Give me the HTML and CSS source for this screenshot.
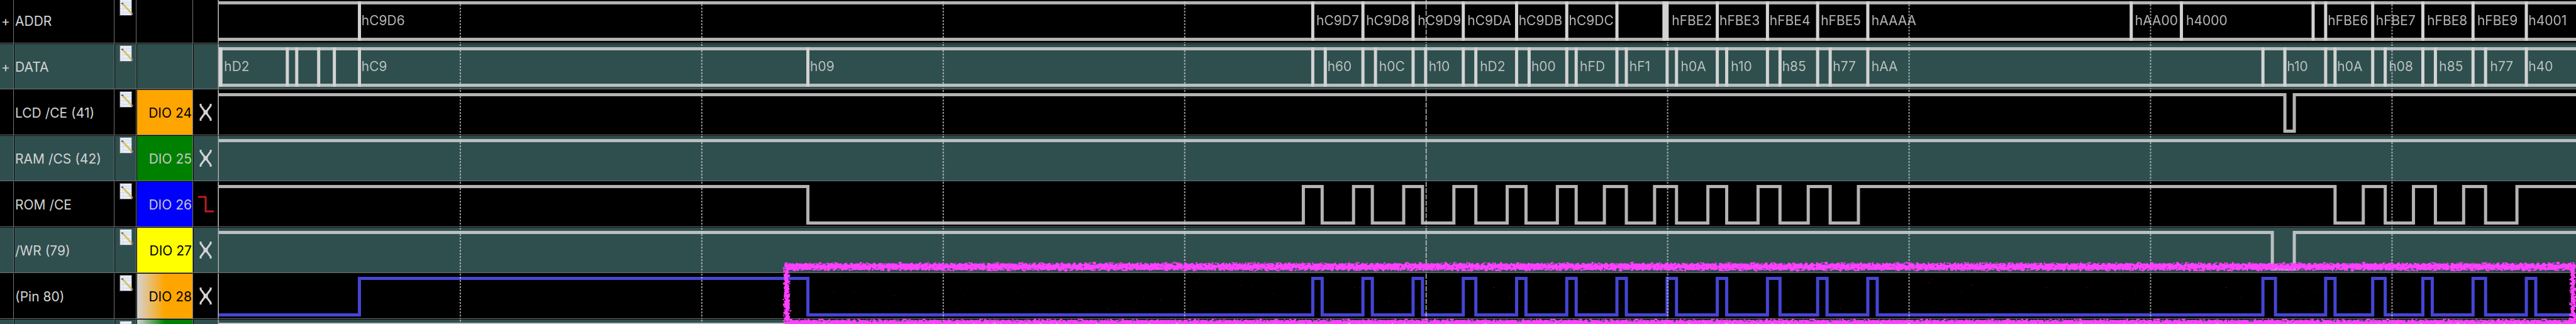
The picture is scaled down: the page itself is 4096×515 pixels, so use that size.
FILE: index.html
```html
<!DOCTYPE html>
<html lang="en">
<head>
<meta charset="utf-8">
<title>Logic analyzer</title>
<link rel="stylesheet" href="styles.css">
</head>
<body>
<svg class="defs" aria-hidden="true">
  <defs>
    <symbol id="note" viewBox="0 0 22 26">
      <rect x="0" y="0" width="20" height="26" fill="#8a8a8a" opacity=".6"/>
      <rect x="1" y="1" width="18" height="24" fill="#eef0f6"/>
      <path d="M3 5h16M3 9h16M3 15h16M3 21h16" stroke="#d5e5f6" stroke-width="3"/>
      <path d="M5.500 1v24" stroke="#e6d6ee"/>
      <path d="M1.500 2v23" stroke="#c4c4cc" stroke-dasharray="2 2"/>
      <path d="M5 7L19 22" stroke="#d9c25c" stroke-width="3"/>
      <path d="M3 6l3 1" stroke="#555" stroke-width="2"/>
      <path d="M19 22l2 2" stroke="#a07aa8" stroke-width="3"/>
    </symbol>
    <symbol id="ignore" viewBox="0 0 20 27">
      <path d="M2 0v3L8 11v5L2 24v3M18 0v3L12 11v5L18 24v3" fill="none" stroke="#d3d3d3" stroke-width="3"/>
      <rect x="8" y="10" width="4" height="7" fill="#d3d3d3"/>
    </symbol>
    <symbol id="falling" viewBox="0 0 25 27">
      <path d="M0 2h12v23h13" fill="none" stroke="#b81c28" stroke-width="3"/>
    </symbol>
  </defs>
</svg>
<main class="board" id="board">
  <svg class="marker" aria-hidden="true">
    <filter id="chalk" x="0" y="0" width="1" height="1" color-interpolation-filters="sRGB">
      <feTurbulence type="fractalNoise" baseFrequency=".22 .3" numOctaves="2" seed="7" result="noise"/>
      <feGaussianBlur in="SourceAlpha" stdDeviation="2" result="soft"/>
      <feComposite in="soft" in2="noise" operator="arithmetic" k1="0" k2=".4" k3=".6" k4="0"/>
      <feComponentTransfer result="mask"><feFuncA type="linear" slope="9" intercept="-4.400"/></feComponentTransfer>
      <feFlood flood-color="#ff40ff"/>
      <feComposite in2="mask" operator="in"/>
    </filter>
    <g filter="url(#chalk)">
      <rect width="100%" height="100%" fill="none"/>
      <rect x="3" y="2" width="99%" height="12"/>
      <rect x="50%" y="2" width="50%" height="12"/>
      <rect x="3" y="2" width="10" height="97"/>
      <rect class="marker-right" x="100%" y="2" width="9" height="97"/>
      <rect x="3" y="92" width="99%" height="10"/>
      <rect x="50%" y="92" width="50%" height="10"/>
    </g>
  </svg>
</main>
<script src="app.js"></script>
</body>
</html>
```
FILE: styles.css
```css
* { box-sizing: border-box; }

body {
  margin: 0;
  height: 100vh;
  overflow: hidden;
  background: #000;
  color: #d3d3d3;
  font: 21px/24px Inter, "Liberation Sans", sans-serif;
}

.defs { position: absolute; width: 0; height: 0; }

.board {
  position: relative;
  display: flex;
  flex-direction: column;
  height: calc(100vh + 4px);
  margin-top: -4px;
  overflow: hidden;
}

.row {
  display: grid;
  flex: none;
  grid-template-columns: 22px 160px 35px 90px 40px minmax(0, 1fr);
  height: 73px;
  border-bottom: 1px solid #737373;
  background: #000;
}

.row:nth-child(even) { background: #2f4f4f; }

.row.last {
  flex: 1 1 0;
  height: auto;
  min-height: 0;
  grid-template-rows: minmax(0, 1fr);
  border-bottom: 0;
  overflow: hidden;
}

.cell {
  display: flex;
  align-items: center;
  min-width: 0;
  border-top: 1px solid #000;
  border-left: 1px solid #000;
  border-right: 1px solid #737373;
  white-space: nowrap;
  overflow: hidden;
}

.cell:first-child { border-left: 0; }

button {
  display: flex;
  padding: 0;
  border: 0;
  background: none;
  color: inherit;
  font: inherit;
}

.expand { padding: 2px 0 0 2px; }
.name { padding: 2px 0 0 1px; }

.note { align-items: flex-start; padding: 2px 0 0 7px; }
.note svg { width: 22px; height: 26px; }

.pin { justify-content: flex-end; padding: 2px 1px 0 0; color: #c8c8c8; }
.pin.dark-text { color: #000; }
.orange { background: #ffa500; }
.green { background: #008000; }
.blue { background: #0000ff; }
.yellow { background: #ffff00; }
.fade-orange { background: linear-gradient(90deg, #d3d3d3, #ffa500 50%); }
.fade-green { background: linear-gradient(90deg, #d3d3d3, #008000 50%); }

.trigger { justify-content: center; }
.trigger .ignore { width: 20px; height: 27px; }
.trigger .falling { width: 25px; height: 27px; }

.lane {
  position: relative;
  border-top: 1px solid #000;
  border-left: 1px solid #b0b0b0;
  overflow: hidden;
}

.lane svg {
  position: relative;
  display: block;
  width: 100%;
  height: 71px;
}

.lane path {
  fill: none;
  stroke: #d3d3d3;
  vector-effect: non-scaling-stroke;
}

.lane .wave { stroke-width: 5px; opacity: .85; }
.lane .edge { stroke-width: 5px; }
.lane .low-pin { stroke: #5252fa; }
.lane .tick { stroke-width: 2px; stroke-dasharray: 3 2; opacity: .7; }
.lane .tick.center { stroke-dasharray: 8 2; }

.value {
  position: absolute;
  top: 24px;
  white-space: nowrap;
  opacity: .85;
}

.marker {
  position: absolute;
  z-index: 1;
  left: 30.350%;
  top: 420px;
  width: 69.650%;
  height: 99px;
}

.marker-right { transform: translateX(-9px); }
```
FILE: app.js
```js
const START = 418, SPAN = 4510, HIGH = 7.5, LOW = 65.5;

const addrEdges = [687, 2511, 2607, 2703, 2799, 2901, 2997, 3093, 3183, 3189, 3285, 3381, 3477, 3573,
  4077, 4173, 4425, 4449, 4539, 4635, 4731, 4833];
const addrValues = [[693, "hC9D6"], [2520, "hC9D7"], [2615, "hC9D8"], [2714, "hC9D9"], [2809, "hC9DA"],
  [2907, "hC9DB"], [3003, "hC9DC"], [3200, "hFBE2"], [3291, "hFBE3"], [3387, "hFBE4"], [3485, "hFBE5"],
  [3582, "hAAAA"], [4086, "hAA00"], [4184, "h4000"], [4455, "hFBE6"], [4547, "hFBE7"], [4645, "hFBE8"],
  [4741, "hFBE9"], [4839, "h4001"]];

const dataEdges = [419, 422, 549, 567, 609, 639, 687, 1545, 2511, 2535, 2607, 2631, 2703, 2727, 2799, 2823,
  2901, 2925, 2997, 3015, 3093, 3111, 3189, 3207, 3285, 3303, 3381, 3405, 3477, 3501, 3573,
  4329, 4371, 4449, 4467, 4539, 4563, 4635, 4659, 4731, 4755, 4833];
const dataValues = [[430, "hD2"], [693, "hC9"], [1551, "h09"], [2541, "h60"], [2640, "h0C"], [2735, "h10"],
  [2833, "hD2"], [2931, "h00"], [3024, "hFD"], [3119, "hF1"], [3217, "h0A"], [3313, "h10"], [3411, "h85"],
  [3508, "h77"], [3582, "hAA"], [4377, "h10"], [4473, "h0A"], [4572, "h08"], [4668, "h85"], [4766, "h77"],
  [4839, "h40"]];

const romToggles = [1545, 2493, 2529, 2589, 2625, 2685, 2721, 2781, 2823, 2883, 2919, 2979, 3015, 3069, 3111,
  3165, 3207, 3267, 3303, 3363, 3405, 3459, 3501, 3555, 4467, 4521, 4563, 4617, 4659, 4713, 4755, 4815];
const pinToggles = [687, 1545, 2511, 2529, 2607, 2625, 2703, 2721, 2799, 2823, 2901, 2919, 2997, 3015, 3093, 3111,
  3189, 3207, 3285, 3303, 3381, 3405, 3477, 3495, 3573, 3591, 4329, 4353, 4449, 4467, 4539, 4563,
  4635, 4653, 4731, 4755, 4833, 4851];

const rows = [
  { name: "ADDR", edges: addrEdges, values: addrValues },
  { name: "DATA", edges: dataEdges, values: dataValues },
  { name: "LCD /CE (41)", pin: "DIO 24", look: "orange dark-text", trigger: "ignore", high: true, toggles: [4371, 4389] },
  { name: "RAM /CS (42)", pin: "DIO 25", look: "green", trigger: "ignore", high: true, toggles: [] },
  { name: "ROM /CE", pin: "DIO 26", look: "blue", trigger: "falling", high: true, toggles: romToggles },
  { name: "/WR (79)", pin: "DIO 27", look: "yellow dark-text", trigger: "ignore", high: true, toggles: [4347, 4389] },
  { name: "(Pin 80)", pin: "DIO 28", look: "fade-orange dark-text", trigger: "ignore", high: false, toggles: pinToggles, wave: "low-pin" },
  { name: "", pin: "", look: "fade-green", high: true, toggles: [], last: true }
];

function wavePath(row) {
  let level = row.high;
  let d = `M0 ${level ? HIGH : LOW}`;
  for (const x of row.toggles) {
    level = !level;
    d += `H${x - START}V${level ? HIGH : LOW}`;
  }
  return d + `H${SPAN}`;
}

function laneMarkup(row) {
  let paths;
  if (row.edges) {
    paths = `<path class="wave" d="M0 ${HIGH}H${SPAN}M0 ${LOW}H${SPAN}"/>` +
      `<path class="edge" d="${row.edges.map(x => `M${x - START} 5V68`).join("")}"/>`;
  } else {
    paths = `<path class="wave ${row.wave || ""}" d="${wavePath(row)}"/>`;
  }
  for (let i = 0; i < 9; i++) {
    paths += `<path class="tick${i === 4 ? " center" : ""}" d="M${880 + 462 * i - START} 0V71"/>`;
  }
  const labels = (row.values || []).map(([x, text]) =>
    `<span class="value" style="left:${((x - 2 - START) / SPAN * 100).toFixed(2)}%">${text}</span>`).join("");
  return `${labels}<svg viewBox="0 0 ${SPAN} 71" preserveAspectRatio="none" aria-hidden="true">${paths}</svg>`;
}

const icon = id => `<svg class="${id}" aria-hidden="true"><use href="#${id}"/></svg>`;
const noteIcon = '<svg aria-hidden="true"><use href="#note"/></svg>';

document.getElementById("board").insertAdjacentHTML("afterbegin", rows.map(row => `
  <div class="row${row.last ? " last" : ""}">
    <div class="cell expand">${row.edges ? '<button aria-label="Expand">+</button>' : ""}</div>
    <div class="cell name">${row.name}</div>
    <div class="cell note"><button aria-label="Edit">${noteIcon}</button></div>
    <div class="cell pin ${row.look || ""}">${row.pin || ""}</div>
    <div class="cell trigger">${row.trigger ? `<button aria-label="Trigger">${icon(row.trigger)}</button>` : ""}</div>
    <div class="lane">${laneMarkup(row)}</div>
  </div>`).join(""));
```
